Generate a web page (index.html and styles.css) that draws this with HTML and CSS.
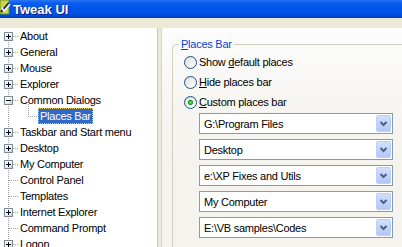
FILE: index.html
```html
<!DOCTYPE html>
<html>
<head>
<meta charset="utf-8">
<link rel="stylesheet" href="styles.css">
</head>
<body>
<div class="window">
  <div class="titlebar">
    <svg class="appicon" width="12" height="16" viewBox="0 0 12 16">
      <rect x="0" y="0" width="9" height="14" fill="#C8D848"/>
      <rect x="0" y="0" width="9" height="14" fill="none" stroke="#6E8A20" stroke-width="1"/>
      <path d="M1 12 L9 3" stroke="#1A2A60" stroke-width="2"/>
      <path d="M2 8 L4 11 L10 4" stroke="#FFFFFF" stroke-width="1.5" fill="none"/>
    </svg>
    <span class="title">Tweak UI</span>
  </div>
  <div class="main">
    <div class="tree">
      <ul class="nodes">
        <li class="node"><span class="gutter"><span class="exp plus"></span></span><span class="label">About</span></li>
        <li class="node"><span class="gutter"><span class="exp plus"></span></span><span class="label">General</span></li>
        <li class="node"><span class="gutter"><span class="exp plus"></span></span><span class="label">Mouse</span></li>
        <li class="node"><span class="gutter"><span class="exp plus"></span></span><span class="label">Explorer</span></li>
        <li class="node open"><span class="gutter"><span class="exp minus"></span></span><span class="label">Common Dialogs</span></li>
        <li class="node"><span class="gutter bare"></span><span class="gutter child"></span><span class="label selected">Places Bar</span></li>
        <li class="node"><span class="gutter"><span class="exp plus"></span></span><span class="label">Taskbar and Start menu</span></li>
        <li class="node"><span class="gutter"><span class="exp plus"></span></span><span class="label">Desktop</span></li>
        <li class="node"><span class="gutter"><span class="exp plus"></span></span><span class="label">My Computer</span></li>
        <li class="node"><span class="gutter"></span><span class="label">Control Panel</span></li>
        <li class="node"><span class="gutter"></span><span class="label">Templates</span></li>
        <li class="node"><span class="gutter"><span class="exp plus"></span></span><span class="label">Internet Explorer</span></li>
        <li class="node"><span class="gutter"></span><span class="label">Command Prompt</span></li>
        <li class="node"><span class="gutter"><span class="exp plus"></span></span><span class="label">Logon</span></li>
      </ul>
    </div>
    <div class="pane">
      <fieldset class="group">
        <legend class="legend"><u>P</u>laces Bar</legend>
        <div class="content">
          <div class="radios">
            <div class="radio"><span class="rb"></span><span class="rtext">Show <u>d</u>efault places</span></div>
            <div class="radio"><span class="rb"></span><span class="rtext"><u>H</u>ide places bar</span></div>
            <div class="radio"><span class="rb checked"></span><span class="rtext"><u>C</u>ustom places bar</span></div>
          </div>
          <div class="combos">
            <div class="combo"><span class="val">G:\Program Files</span><span class="btn"><svg width="13" height="15" viewBox="0 0 13 15"><polyline points="3.5,6 6.5,9 9.5,6" fill="none" stroke="#4D6185" stroke-width="2"/></svg></span></div>
            <div class="combo"><span class="val">Desktop</span><span class="btn"><svg width="13" height="15" viewBox="0 0 13 15"><polyline points="3.5,6 6.5,9 9.5,6" fill="none" stroke="#4D6185" stroke-width="2"/></svg></span></div>
            <div class="combo"><span class="val">e:\XP Fixes and Utils</span><span class="btn"><svg width="13" height="15" viewBox="0 0 13 15"><polyline points="3.5,6 6.5,9 9.5,6" fill="none" stroke="#4D6185" stroke-width="2"/></svg></span></div>
            <div class="combo"><span class="val">My Computer</span><span class="btn"><svg width="13" height="15" viewBox="0 0 13 15"><polyline points="3.5,6 6.5,9 9.5,6" fill="none" stroke="#4D6185" stroke-width="2"/></svg></span></div>
            <div class="combo"><span class="val">E:\VB samples\Codes</span><span class="btn"><svg width="13" height="15" viewBox="0 0 13 15"><polyline points="3.5,6 6.5,9 9.5,6" fill="none" stroke="#4D6185" stroke-width="2"/></svg></span></div>
          </div>
        </div>
      </fieldset>
    </div>
  </div>
</div>
</body>
</html>
```
FILE: styles.css
```css
* { box-sizing: border-box; }
html, body { margin: 0; padding: 0; }
body {
  width: 402px;
  height: 247px;
  overflow: hidden;
  background: #ECE9D8;
  font-family: "Liberation Sans", Arial, sans-serif;
  font-size: 11px;
  letter-spacing: -0.25px;
  color: #000;
}
.window {
  display: flex;
  flex-direction: column;
  height: 247px;
}
.titlebar {
  height: 18px;
  flex: none;
  display: flex;
  align-items: center;
  background: linear-gradient(to bottom, #2C74F4 0px, #0A5DF0 3px, #0056EA 8px, #0053E4 14px, #0048D6 16px, #003EC4 18px);
}
.appicon {
  flex: none;
  align-self: flex-start;
}
.title {
  margin-left: 1px;
  font-weight: bold;
  font-size: 13px;
  color: #FFFFFF;
  text-shadow: 1px 1px 0 #0A1883;
  letter-spacing: 0;
}
.main {
  flex: 1;
  display: flex;
  gap: 3px;
  padding-top: 10px;
  min-height: 0;
}
.tree {
  width: 158px;
  flex: none;
  background: #FFFFFF;
  border-right: 1px solid #C9C6B8;
  overflow: hidden;
}
.nodes {
  list-style: none;
  margin: 0;
  padding: 0;
  background: repeating-linear-gradient(to bottom, #A0A0A0 0 1px, transparent 1px 2px) 8px 8px / 1px 100% no-repeat;
}
.node {
  height: 16px;
  display: flex;
  align-items: center;
  white-space: nowrap;
}
.node.open {
  background: repeating-linear-gradient(to bottom, #A0A0A0 0 1px, transparent 1px 2px) 28px 12px / 1px 4px no-repeat;
}
.gutter {
  width: 19px;
  height: 16px;
  flex: none;
  display: flex;
  align-items: center;
  background: repeating-linear-gradient(to right, #A0A0A0 0 1px, transparent 1px 2px) 9px 8px / 10px 1px no-repeat;
}
.gutter.bare { background: none; }
.gutter.child {
  background:
    repeating-linear-gradient(to right, #A0A0A0 0 1px, transparent 1px 2px) 9px 8px / 10px 1px no-repeat,
    repeating-linear-gradient(to bottom, #A0A0A0 0 1px, transparent 1px 2px) 9px 0px / 1px 8px no-repeat;
}
.exp {
  width: 9px;
  height: 9px;
  margin-left: 4px;
  border: 1px solid #7B8A9B;
}
.exp.plus {
  background:
    linear-gradient(#000, #000) 1px 3px / 5px 1px no-repeat,
    linear-gradient(#000, #000) 3px 1px / 1px 5px no-repeat,
    linear-gradient(135deg, #FFFFFF 35%, #D2CEC2);
}
.exp.minus {
  background:
    linear-gradient(#000, #000) 1px 3px / 5px 1px no-repeat,
    linear-gradient(135deg, #FFFFFF 35%, #D2CEC2);
}
.label {
  padding: 0 1px;
  line-height: 16px;
  height: 16px;
}
.label.selected {
  background: #316AC5;
  color: #FFFFFF;
  border: 1px dotted #E8C860;
  line-height: 14px;
  padding: 0 1px;
}
.pane {
  flex: 1;
  min-width: 0;
  border-left: 1px solid #D8D5C6;
  background: linear-gradient(to bottom, #FDFDFE 0px, #F6F5F1 80px, #F4F3EE 140px);
  padding: 10px 0 0 10px;
  overflow: hidden;
}
.group {
  margin: 0;
  padding: 0;
  width: 300px;
  height: 260px;
  border: 1px solid #D0D0BF;
  border-radius: 4px;
  min-width: 0;
}
.legend {
  margin-left: 6px;
  padding: 0 2px;
  color: #0046D5;
  line-height: 13px;
  font-size: 11px;
}
.content {
  margin-left: 11px;
  padding-top: 1px;
}
.radio {
  height: 20px;
  display: flex;
  align-items: center;
  gap: 2px;
}
.rb {
  width: 13px;
  height: 13px;
  flex: none;
  border-radius: 50%;
  border: 1px solid #1C5180;
  background: linear-gradient(135deg, #DCDCD7 0%, #F4F4F0 60%, #FFFFFF 100%);
}
.rb.checked {
  background:
    radial-gradient(circle at 50% 50%, #6CE06A 0, #21A121 2.2px, rgba(33,161,33,0) 3px),
    linear-gradient(135deg, #DCDCD7 0%, #F4F4F0 60%, #FFFFFF 100%);
}
.combos {
  margin-top: 1px;
  margin-left: 15px;
  display: flex;
  flex-direction: column;
  gap: 5px;
}
.combo {
  width: 194px;
  height: 21px;
  border: 1px solid #7F9DB9;
  background: #FFFFFF;
  display: flex;
  align-items: center;
  justify-content: space-between;
}
.val {
  padding-left: 4px;
  white-space: nowrap;
}
.btn {
  width: 15px;
  height: 17px;
  margin-right: 1px;
  display: flex;
  align-items: center;
  justify-content: center;
  border: 1px solid #BCCFF8;
  border-radius: 2px;
  background: linear-gradient(to bottom, #D2DFFD 0%, #C1D3FB 50%, #B3C8F8 100%);
}
.btn svg { display: block; }
```
